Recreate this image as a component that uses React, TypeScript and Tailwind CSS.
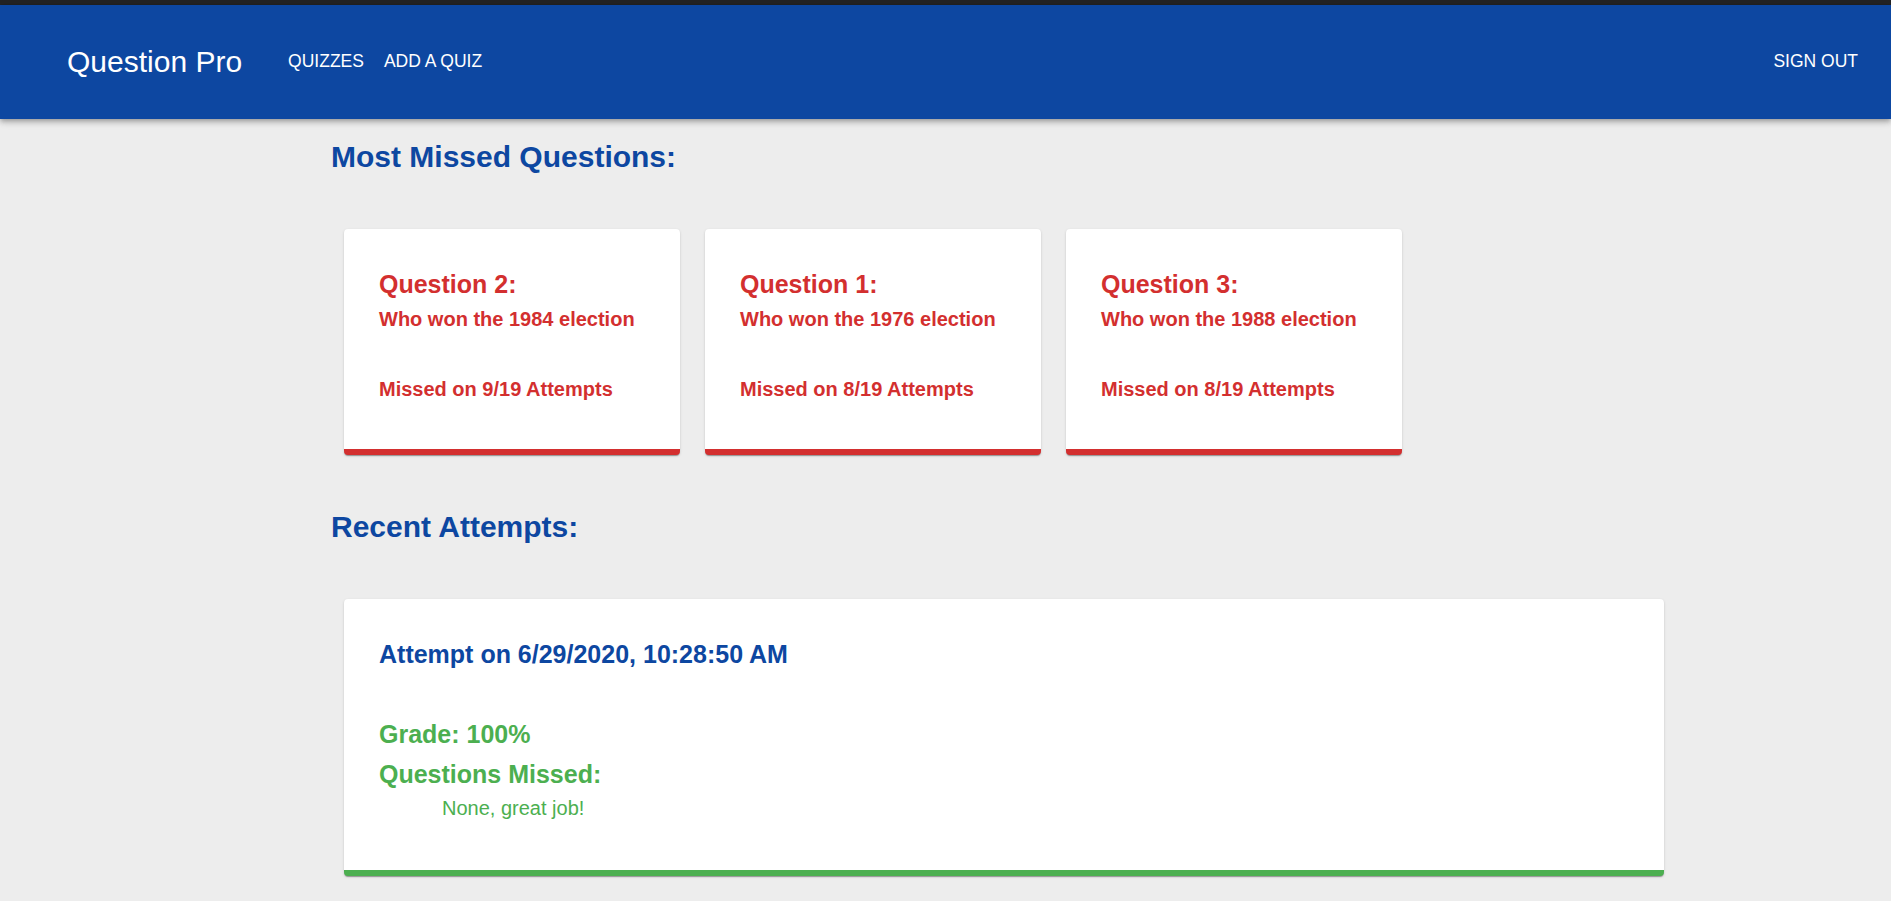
import React from "react";

const font = { fontFamily: '"Liberation Sans", Arial, sans-serif' };

const missed = [
  { q: "Question 2:", text: "Who won the 1984 election", m: "Missed on 9/19 Attempts" },
  { q: "Question 1:", text: "Who won the 1976 election", m: "Missed on 8/19 Attempts" },
  { q: "Question 3:", text: "Who won the 1988 election", m: "Missed on 8/19 Attempts" },
];

const cardShadow =
  "shadow-[0_2px_1px_-1px_rgba(0,0,0,0.2),0_1px_1px_0_rgba(0,0,0,0.14),0_1px_3px_0_rgba(0,0,0,0.12)]";

export default function App() {
  return (
    <div className="min-h-screen bg-[#ededed]" style={font}>
      <div className="h-[5px] bg-[#232323]" />
      <header className="relative z-10 flex h-[114px] items-center bg-[#0d47a1] pl-[67px] pr-[33px] text-white shadow-[0_2px_4px_-1px_rgba(0,0,0,0.2),0_4px_5px_0_rgba(0,0,0,0.14),0_1px_10px_0_rgba(0,0,0,0.12)]">
        <div className="text-[30px] leading-none">Question Pro</div>
        <nav className="ml-[46px] flex gap-[20px] text-[17.5px] leading-none">
          <span>QUIZZES</span>
          <span>ADD A QUIZ</span>
        </nav>
        <div className="ml-auto text-[17.5px] leading-none">SIGN OUT</div>
      </header>

      <main className="pl-[331px] pb-[40px]">
        <h2 className="mt-[23px] text-[30px] font-bold leading-none text-[#0d47a1]">
          Most Missed Questions:
        </h2>
        <div className="mt-[57px] ml-[13px] flex gap-[25px]">
          {missed.map((c) => (
            <div
              key={c.q}
              className={`w-[336px] rounded-[4px] border-b-[6px] border-[#d32f2f] bg-white pl-[35px] pt-[43px] pb-[50px] text-[#d32f2f] ${cardShadow}`}
            >
              <div className="text-[25px] font-bold leading-none">{c.q}</div>
              <div className="mt-[12px] text-[20px] font-bold leading-none">{c.text}</div>
              <div className="mt-[50px] text-[20px] font-bold leading-none">{c.m}</div>
            </div>
          ))}
        </div>

        <h2 className="mt-[57px] text-[30px] font-bold leading-none text-[#0d47a1]">
          Recent Attempts:
        </h2>
        <div
          className={`mt-[57px] ml-[13px] w-[1320px] rounded-[4px] border-b-[6px] border-[#4caf50] bg-white pl-[35px] pt-[43px] pb-[52px] ${cardShadow}`}
        >
          <div className="text-[25px] font-bold leading-none text-[#0d47a1]">
            Attempt on 6/29/2020, 10:28:50 AM
          </div>
          <div className="mt-[55px] text-[25px] font-bold leading-none text-[#4caf50]">Grade: 100%</div>
          <div className="mt-[15px] text-[25px] font-bold leading-none text-[#4caf50]">Questions Missed:</div>
          <div className="mt-[11px] pl-[63px] text-[20px] leading-none text-[#4caf50]">None, great job!</div>
        </div>
      </main>
    </div>
  );
}
